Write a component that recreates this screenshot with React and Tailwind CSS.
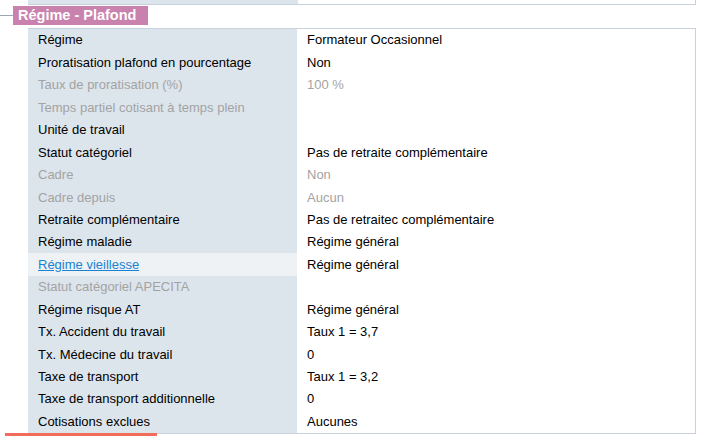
export default function App() {
  const rows = [
    ["Régime", "Formateur Occasionnel"],
    ["Proratisation plafond en pourcentage", "Non"],
    ["Taux de proratisation (%)", "100 %", true],
    ["Temps partiel cotisant à temps plein", "", true],
    ["Unité de travail", ""],
    ["Statut catégoriel", "Pas de retraite complémentaire"],
    ["Cadre", "Non", true],
    ["Cadre depuis", "Aucun", true],
    ["Retraite complémentaire", "Pas de retraitec complémentaire"],
    ["Régime maladie", "Régime général"],
    ["Régime vieillesse", "Régime général", false, true],
    ["Statut catégoriel APECITA", "", true],
    ["Régime risque AT", "Régime général"],
    ["Tx. Accident du travail", "Taux 1 = 3,7"],
    ["Tx. Médecine du travail", "0"],
    ["Taxe de transport", "Taux 1 = 3,2"],
    ["Taxe de transport additionnelle", "0"],
    ["Cotisations exclues", "Aucunes"],
  ];
  return (
    <div className="w-[702px] h-[436px] bg-white overflow-hidden relative text-[13px] text-black" style={{ fontFamily: '"Liberation Sans", Arial, sans-serif' }}>
      <div className="ml-[28px] w-[668px] h-[5px] flex border-b border-r border-[#c9d2dc]">
        <div className="w-[270px] bg-[#dde5ec]"></div>
        <div className="flex-1 bg-white"></div>
      </div>
      <div className="flex items-center h-[19px] mt-[1px]">
        <div className="w-[13px] h-px bg-[#9aa6b3]"></div>
        <div className="bg-[#c982ad] text-white font-bold text-[14.5px] leading-[19px] px-[5px] w-[135px] whitespace-nowrap">Régime - Plafond</div>
      </div>
      <div className="ml-[28px] mt-[3px] w-[668px] border-t border-r border-b border-[#c9d2dc]">
        {rows.map(([l, r, dis, link], i) => (
          <div key={i} className="flex h-[22.45px] items-center">
            <div className={`w-[269px] h-full flex items-center pl-[10px] whitespace-nowrap ${link ? "bg-[#eef2f5]" : "bg-[#dde5ec]"} ${dis ? "text-[#a3a3a3]" : ""}`}>
              {link ? <span className="text-[#1a82d0] underline">{l}</span> : l}
            </div>
            <div className={`flex-1 pl-[10px] ${dis ? "text-[#a3a3a3]" : ""}`}>{r}</div>
          </div>
        ))}
      </div>
      <div className="absolute left-[5px] top-[433px] w-[152px] h-[3px] bg-[#f26b5b]"></div>
    </div>
  );
}
